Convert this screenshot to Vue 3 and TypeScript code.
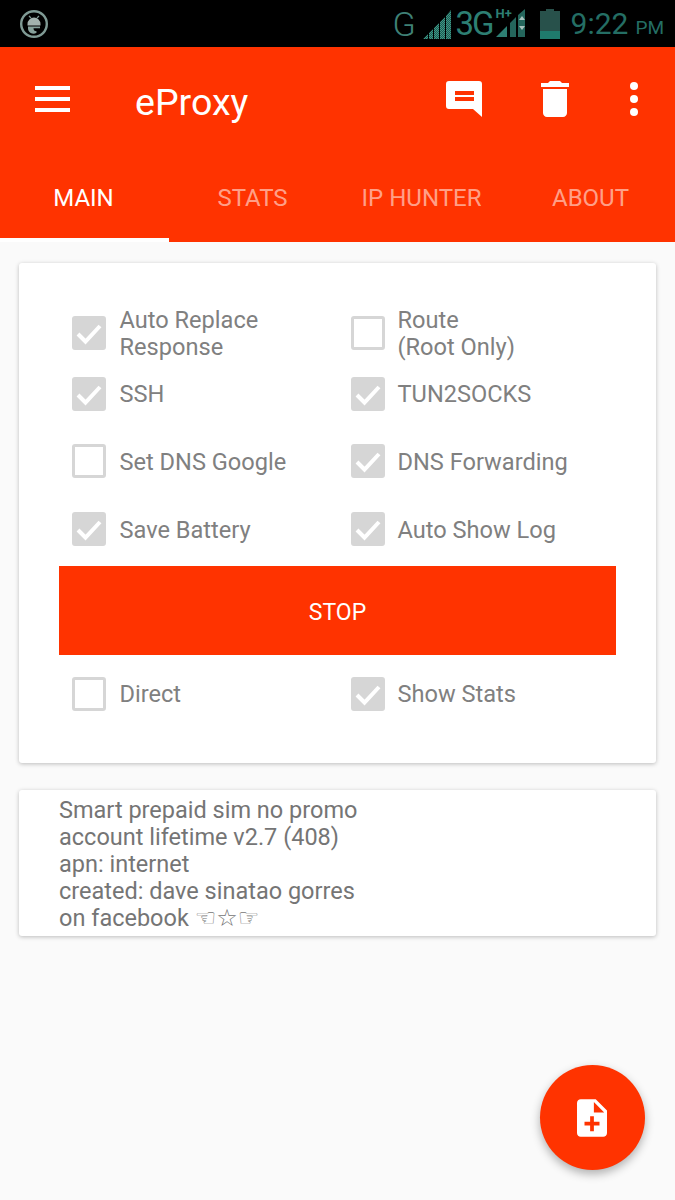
<template>
  <div class="screen">
    <div class="status-bar">
      <svg class="android-badge" width="30" height="30" viewBox="0 0 30 30">
        <circle cx="15" cy="15" r="12.8" fill="none" stroke="#7f9a94" stroke-width="2.4" />
        <path d="M10 7l2 2M20 7l-2 2" stroke="#7f9a94" stroke-width="1.200" />
        <path d="M8.500 15a6.500 6.500 0 0 1 13 0v1.500h-13z" fill="#a3b2ae" />
        <path d="M9 17.500h12v1.800h-6.500a3 3 0 0 0 3 3v1.500a5.500 5.500 0 0 1-8.500-5z" fill="#86a09a" />
      </svg>
      <div class="status-right">
        <span class="net-g">G</span>
        <svg class="signal" width="30" height="31" viewBox="0 0 30 31">
          <defs>
            <pattern id="dots" width="2" height="2" patternUnits="userSpaceOnUse">
              <rect width="2" height="2" fill="#1d5a50" />
              <rect width="1" height="1" fill="#3f9686" />
              <rect x="1" y="1" width="1" height="1" fill="#3f9686" />
            </pattern>
          </defs>
          <path d="M1 31l5-5v5zM7 25l4-4v10H7zM12 20l5-5v16h-5zM18 14l5-5v22h-5zM24 8l5-6v29h-5z" fill="url(#dots)" />
        </svg>
        <span class="net-3g">3G</span>
        <div class="hplus-wrap">
          <span class="hplus">H+</span>
          <svg width="32" height="30" viewBox="0 0 32 30">
            <path d="M1 28l11-11v11z" fill="#2d7f73" />
            <path d="M15 28V14l6-6v20zM23 28V6l7-6v28z" fill="#2d7f73" opacity=".8" />
            <path d="M24 11l3-4 3 4zM24 17l3 4 3-4z" fill="#a9c4bf" />
          </svg>
        </div>
        <svg class="battery" width="20" height="30" viewBox="0 0 20 30">
          <path d="M6 0h8v2h6v28H0V2h6z" fill="#3d7d73" opacity=".65" />
          <rect y="22" width="20" height="8" fill="#1f7a6c" />
        </svg>
        <span class="clock">9:22<small>PM</small></span>
      </div>
    </div>

    <header class="app-bar">
      <div class="toolbar">
        <div class="menu-icon"><i></i><i></i><i></i></div>
        <div class="app-title">eProxy</div>
        <svg class="tool-comment" width="38" height="38" viewBox="0 0 38 38">
          <path d="M3 1h30a3 3 0 0 1 3 3v33l-9-8H3a3 3 0 0 1-3-3V4a3 3 0 0 1 3-3z" fill="#fff" />
          <path d="M9 11h19v4H9zM9 17h19v4H9z" fill="#ff3300" />
        </svg>
        <svg class="tool-trash" width="28" height="36" viewBox="5 3 14 18">
          <path d="M6 19c0 1.100.9 2 2 2h8c1.100 0 2-.9 2-2V7H6v12zM19 4h-3.500l-1-1h-5l-1 1H5v2h14V4z" fill="#fff" />
        </svg>
        <div class="more-icon"><i></i><i></i><i></i></div>
      </div>
      <nav class="tabs">
        <div v-for="(tab, i) in tabs" :key="tab" class="tab" :class="{ active: i === 0 }">{{ tab }}</div>
      </nav>
    </header>

    <main class="content">
      <section class="card options">
        <div class="opt-grid top">
          <label v-for="opt in topOptions" :key="opt.text" class="opt">
            <span class="box" :class="{ on: opt.on }">
              <svg v-if="opt.on" width="34" height="34" viewBox="0 0 34 34">
                <path d="M6 18l7.500 7.500L28 10" fill="none" stroke="#fff" stroke-width="4" />
              </svg>
            </span>
            <span class="opt-text">{{ opt.text }}</span>
          </label>
        </div>
        <button class="stop-btn">STOP</button>
        <div class="opt-grid bottom">
          <label v-for="opt in bottomOptions" :key="opt.text" class="opt">
            <span class="box" :class="{ on: opt.on }">
              <svg v-if="opt.on" width="34" height="34" viewBox="0 0 34 34">
                <path d="M6 18l7.500 7.500L28 10" fill="none" stroke="#fff" stroke-width="4" />
              </svg>
            </span>
            <span class="opt-text">{{ opt.text }}</span>
          </label>
        </div>
      </section>

      <section class="card note">
        <div>Smart prepaid sim no promo</div>
        <div>account lifetime v2.7 (408)</div>
        <div>apn: internet</div>
        <div>created: dave sinatao gorres</div>
        <div>on facebook <span class="glyphs">☜☆☞</span></div>
      </section>
    </main>

    <button class="fab" aria-label="add">
      <svg width="30" height="38" viewBox="4 2 16 20">
        <path d="M14 2H6c-1.100 0-1.990.9-1.990 2L4 20c0 1.100.89 2 1.990 2H18c1.100 0 2-.9 2-2V8l-6-6zm2 14h-3v3h-2v-3H8v-2h3v-3h2v3h3v2zm-3-7V3.500L18.500 9H13z" fill="#fff" />
      </svg>
    </button>
  </div>
</template>

<script setup lang="ts">
interface Option {
  text: string
  on: boolean
}

const tabs = ['MAIN', 'STATS', 'IP HUNTER', 'ABOUT']

const topOptions: Option[] = [
  { text: 'Auto Replace\nResponse', on: true },
  { text: 'Route\n(Root Only)', on: false },
  { text: 'SSH', on: true },
  { text: 'TUN2SOCKS', on: true },
  { text: 'Set DNS Google', on: false },
  { text: 'DNS Forwarding', on: true },
  { text: 'Save Battery', on: true },
  { text: 'Auto Show Log', on: true }
]

const bottomOptions: Option[] = [
  { text: 'Direct', on: false },
  { text: 'Show Stats', on: true }
]
</script>

<style>
html,
body {
  margin: 0;
  background: #fafafa;
}
</style>

<style scoped>
.screen {
  position: relative;
  width: 675px;
  height: 1200px;
  overflow: hidden;
  background: #fafafa;
  font-family: Roboto, "Liberation Sans", sans-serif;
}

.status-bar {
  height: 47px;
  background: #000;
  display: flex;
  align-items: center;
  justify-content: space-between;
  padding: 0 11px 0 19px;
  box-sizing: border-box;
}

.status-right {
  display: flex;
  align-items: center;
  color: #246e64;
  height: 100%;
}

.net-g {
  font-size: 34px;
  font-weight: 300;
  color: #3f8176;
  width: 29px;
}

.signal {
  margin: 0 4px 0 0;
}

.net-3g {
  font-size: 33px;
  letter-spacing: -2px;
  color: #2d7f73;
}

.hplus-wrap {
  position: relative;
  width: 34px;
  height: 30px;
  margin: 0 11px 0 2px;
}

.hplus {
  position: absolute;
  left: 1px;
  top: -3px;
  font-size: 13px;
  font-weight: 700;
  color: #2d7f73;
}

.clock {
  margin-left: 11px;
  font-size: 30px;
  color: #246e64;
}

.clock small {
  font-size: 19px;
  margin-left: 7px;
}

.app-bar {
  height: 195px;
  background: #ff3300;
}

.toolbar {
  height: 110px;
  display: flex;
  align-items: center;
  box-sizing: border-box;
  padding: 0 0 0 35px;
}

.menu-icon {
  width: 35px;
  display: flex;
  flex-direction: column;
  gap: 7px;
  margin-top: -6px;
}

.menu-icon i {
  display: block;
  height: 4px;
  background: #fff;
}

.app-title {
  margin-left: 65px;
  font-size: 37.500px;
  color: #fff;
  width: 311px;
}

.tool-comment {
  margin-top: -6px;
}

.tool-trash {
  margin: -6px 0 0 57px;
}

.more-icon {
  margin: -6px 0 0 61px;
  display: flex;
  flex-direction: column;
  gap: 5px;
}

.more-icon i {
  display: block;
  width: 8px;
  height: 8px;
  border-radius: 50%;
  background: #fff;
}

.tabs {
  height: 85px;
  display: grid;
  grid-template-columns: repeat(4, 169px);
}

.tab {
  height: 85px;
  box-sizing: border-box;
  padding: 27px 2px 0 0;
  text-align: center;
  font-size: 24px;
  color: rgba(255, 255, 255, 0.55);
}

.tab.active {
  color: #fff;
  border-bottom: 4px solid #fff;
}

.content {
  padding: 21px 19px 0;
}

.card {
  background: #fff;
  border-radius: 3px;
  box-shadow: 0 1px 4px rgba(0, 0, 0, 0.25);
}

.options {
  height: 500px;
  box-sizing: border-box;
  padding: 43px 40px 0;
}

.opt-grid {
  display: grid;
  grid-template-columns: 279px 1fr;
  padding-left: 13px;
}

.opt-grid.top {
  grid-template-rows: 54px 67px 68px 68px;
}

.opt-grid.top .opt-text {
  padding-top: 2px;
}

.opt-grid.bottom {
  grid-template-rows: 68px;
  margin-top: 5px;
}

.opt {
  display: flex;
  align-items: center;
  gap: 13.500px;
}

.opt:nth-child(even) {
  gap: 12.500px;
}

.box {
  flex: none;
  width: 34px;
  height: 34px;
  box-sizing: border-box;
  border: 3px solid #d6d6d6;
  border-radius: 3px;
  position: relative;
}

.box svg {
  position: absolute;
  left: -3px;
  top: -3px;
}

.box.on {
  background: #d6d6d6;
}

.opt-text {
  white-space: pre-line;
  font-size: 23.600px;
  line-height: 27px;
  color: #808080;
}

.stop-btn {
  display: block;
  width: 557px;
  height: 89px;
  margin: 3px 0 0;
  border: 0;
  padding: 3px 0 0;
  background: #ff3300;
  color: #fff;
  font: inherit;
  font-size: 23px;
}

.note {
  margin-top: 27px;
  height: 146px;
  box-sizing: border-box;
  padding: 7px 40px 0;
  font-size: 23.500px;
  line-height: 27px;
  color: #757575;
}

.glyphs {
  font-family: "DejaVu Sans", sans-serif;
  font-size: 24px;
  line-height: 20px;
}

.fab {
  position: absolute;
  left: 540px;
  top: 1065px;
  width: 105px;
  height: 105px;
  border: 0;
  padding: 0 2px 0 0;
  border-radius: 50%;
  background: #ff3300;
  box-shadow: 0 4px 10px rgba(0, 0, 0, 0.3);
  display: flex;
  align-items: center;
  justify-content: center;
}
</style>
